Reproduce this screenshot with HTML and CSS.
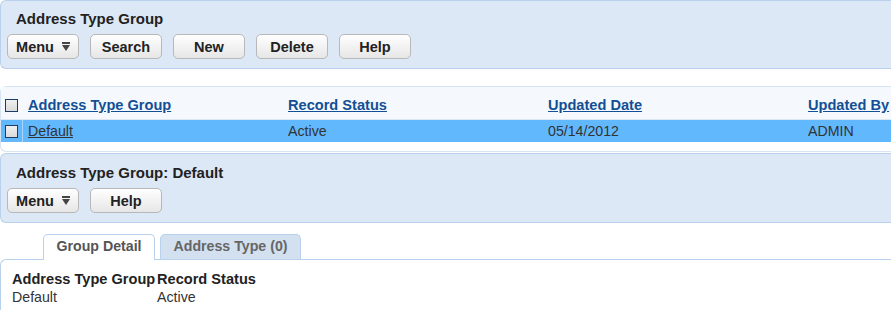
FILE: index.html
```html
<!DOCTYPE html>
<html lang="en">
<head>
    <meta charset="UTF-8">
    <title>Address Type Group</title>
    <link rel="stylesheet" href="styles.css">
</head>
<body>
    <div class="panel top-panel">
        <div class="panel-title">Address Type Group</div>
        <div class="toolbar">
            <button class="btn btn-menu">Menu <svg width="8" height="9" viewBox="0 0 8 9"><rect x="0" y="0" width="8" height="2" fill="#444"/><path d="M0 3 H8 L4 9 Z" fill="#444"/></svg></button>
            <button class="btn">Search</button>
            <button class="btn">New</button>
            <button class="btn">Delete</button>
            <button class="btn">Help</button>
        </div>
    </div>

    <div class="grid">
        <div class="grid-row grid-head">
            <div class="cell-check"><span class="check"></span></div>
            <div class="cell"><a href="#">Address Type Group</a></div>
            <div class="cell"><a href="#">Record Status</a></div>
            <div class="cell"><a href="#">Updated Date</a></div>
            <div class="cell"><a href="#">Updated By</a></div>
        </div>
        <div class="grid-row grid-selected">
            <div class="cell-check"><span class="check"></span></div>
            <div class="cell"><a href="#">Default</a></div>
            <div class="cell">Active</div>
            <div class="cell">05/14/2012</div>
            <div class="cell">ADMIN</div>
        </div>
    </div>

    <div class="panel detail-panel">
        <div class="panel-title">Address Type Group: Default</div>
        <div class="toolbar">
            <button class="btn btn-menu">Menu <svg width="8" height="9" viewBox="0 0 8 9"><rect x="0" y="0" width="8" height="2" fill="#444"/><path d="M0 3 H8 L4 9 Z" fill="#444"/></svg></button>
            <button class="btn">Help</button>
        </div>
    </div>

    <div class="tabs">
        <div class="tab active">Group Detail</div>
        <div class="tab">Address Type (0)</div>
    </div>
    <div class="tab-body">
        <div class="field">
            <div class="label">Address Type Group</div>
            <div class="value">Default</div>
        </div>
        <div class="field">
            <div class="label">Record Status</div>
            <div class="value">Active</div>
        </div>
    </div>
</body>
</html>
```

FILE: styles.css
```css
body {
    margin: 0;
    font-family: "Liberation Sans", Arial, sans-serif;
    font-size: 14.2px;
    color: #333;
    background: #fff;
    overflow: hidden;
}
.panel {
    background: #dce8f5;
    border: 1px solid #b9d1ec;
    border-right: none;
    border-radius: 6px 0 0 6px;
    padding: 9px 0 9px 6px;
}
.panel-title {
    font-size: 15px;
    font-weight: bold;
    color: #222;
    line-height: 17px;
    padding-left: 9px;
    margin-bottom: 7px;
}
.toolbar {
    display: flex;
    gap: 11px;
}
.btn {
    height: 25px;
    width: 72px;
    padding: 0;
    font-family: "Liberation Sans", Arial, sans-serif;
    font-size: 14.5px;
    font-weight: bold;
    color: #222;
    background: linear-gradient(#ffffff, #e6e6e6);
    border: 1px solid #b8b8b8;
    border-radius: 5px;
}
.btn-menu {
    display: flex;
    align-items: center;
    justify-content: center;
    gap: 8px;
}
.grid {
    margin-top: 17px;
    border: 1px solid #d6e4f3;
    border-right: none;
    border-radius: 6px 0 0 6px;
    padding-bottom: 9px;
    margin-bottom: 1px;
}
.grid-row {
    display: flex;
    align-items: center;
    overflow: hidden;
}
.grid-head {
    height: 33px;
    background: #f5f9fd;
    border-bottom: 1px solid #dbe6f2;
    padding-top: 4px;
    box-sizing: border-box;
}
.grid-head a {
    color: #134f94;
    font-weight: bold;
    font-size: 14.6px;
}
.grid-selected {
    height: 22px;
    background: #61b8fd;
}
.grid-selected a {
    color: #333;
}
.cell-check {
    width: 21px;
    flex-shrink: 0;
    align-self: stretch;
    display: flex;
    align-items: center;
    justify-content: center;
    border-right: 1px solid transparent;
}
.grid-selected .cell-check {
    border-right-color: #a9d7fd;
}
.check {
    width: 11px;
    height: 11px;
    border: 1px solid #1d3c63;
    background: linear-gradient(#f0f0f0, #dadada);
}
.cell {
    width: 255px;
    flex-shrink: 0;
    padding-left: 5px;
    white-space: nowrap;
}
.detail-panel {
    padding-top: 10px;
}
.tabs {
    display: flex;
    gap: 5px;
    padding-left: 43px;
    margin-top: 11px;
}
.tab {
    height: 24px;
    line-height: 23px;
    width: 139px;
    text-align: center;
    font-size: 14.2px;
    font-weight: bold;
    color: #666;
    background: #d2e0f0;
    border: 1px solid #b9d1ec;
    border-bottom: none;
    border-radius: 5px 5px 0 0;
}
.tab.active {
    width: 110px;
    height: 25px;
    margin-bottom: -1px;
    background: #fff;
    color: #555;
}
.tab-body {
    border-top: 1px solid #b9d1ec;
    border-left: 1px solid #b9d1ec;
    border-radius: 6px 0 0 0;
    padding: 10px 0 0 11px;
    display: flex;
    height: 40px;
}
.field .label {
    font-weight: bold;
    font-size: 14.6px;
    color: #222;
    line-height: 18px;
}
.field .value {
    line-height: 18px;
}
.field:first-child {
    width: 145px;
}
```
